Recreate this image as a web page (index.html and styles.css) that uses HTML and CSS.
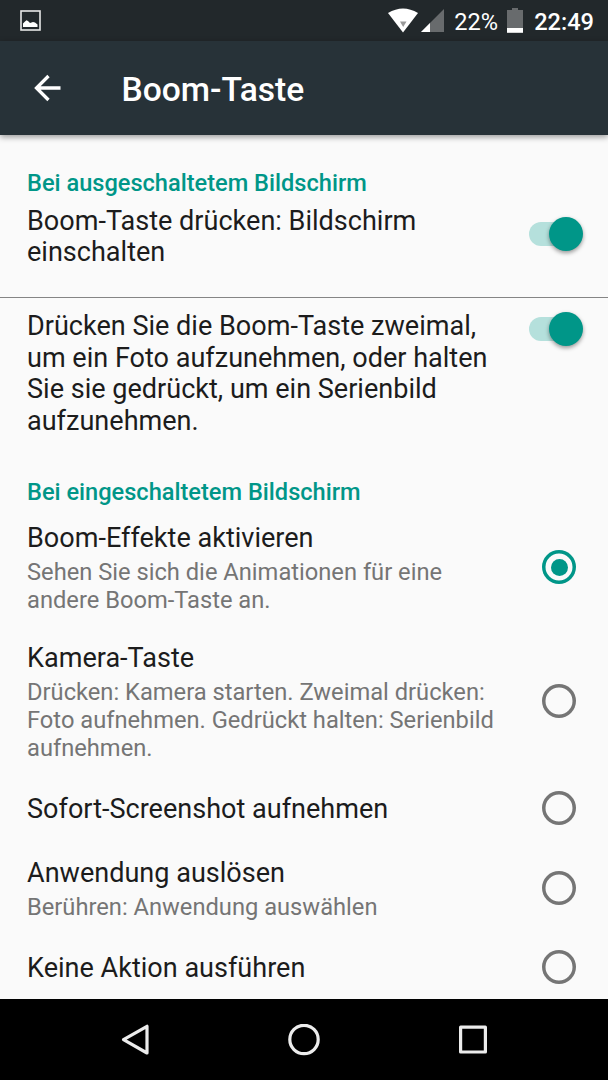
FILE: index.html
```html
<!DOCTYPE html>
<html lang="de">
<head>
    <meta charset="UTF-8">
    <meta name="viewport" content="width=device-width, initial-scale=1.0">
    <title>Boom-Taste</title>
    <link rel="stylesheet" href="styles.css">
</head>
<body>
    <div class="screen">
        <div class="status-bar">
            <svg class="status-picture" width="22" height="22" viewBox="0 0 22 22">
                <rect x="1" y="1" width="19" height="19" fill="none" stroke="#e8e8e8" stroke-width="1.6"/>
                <path d="M3 17V13.500L5 11.500L6.500 10.300L8 11L10 13L13 12L15 12.500L17.500 14.500V17Z" fill="#fff"/>
            </svg>
            <svg class="status-wifi" width="30" height="25" viewBox="0 0 30 25">
                <path d="M0 5Q15 -4 30 5L15 24.500Z" fill="#fff"/>
                <path d="M12 13.500H18.500L15.200 19Z" fill="#999"/>
            </svg>
            <svg class="status-signal" width="23" height="23" viewBox="0 0 23 23">
                <path d="M23 0V23H0Z" fill="#686b6d"/>
                <path d="M9 14V23H0Z" fill="#fff"/>
            </svg>
            <span class="status-percent">22%</span>
            <svg class="status-battery" width="16" height="25" viewBox="0 0 16 25">
                <path d="M5 0H11V2H16V25H0V2H5Z" fill="#686b6d"/>
                <rect y="20" width="16" height="4.700" fill="#fff"/>
            </svg>
            <span class="status-time">22:49</span>
        </div>

        <header class="app-bar">
            <svg class="back-icon" width="28" height="28" viewBox="0 0 28 28">
                <path d="M27.500 14H3M15.500 2L3.500 14L15.500 26" fill="none" stroke="#fff" stroke-width="3.300"/>
            </svg>
            <h1 class="app-title">Boom-Taste</h1>
        </header>

        <main class="content">
            <h2 class="category">Bei ausgeschaltetem Bildschirm</h2>
            <div class="row row-switch row-screen">
                <p class="row-title">Boom-Taste drücken: Bildschirm<br>einschalten</p>
                <div class="switch"><div class="thumb"></div></div>
            </div>
            <div class="row row-switch row-photo">
                <p class="row-title">Drücken Sie die Boom-Taste zweimal,<br>um ein Foto aufzunehmen, oder halten<br>Sie sie gedrückt, um ein Serienbild<br>aufzunehmen.</p>
                <div class="switch"><div class="thumb"></div></div>
            </div>

            <h2 class="category category-on">Bei eingeschaltetem Bildschirm</h2>
            <div class="row row-effects">
                <div class="row-text">
                    <p class="row-title">Boom-Effekte aktivieren</p>
                    <p class="row-summary">Sehen Sie sich die Animationen für eine<br>andere Boom-Taste an.</p>
                </div>
                <div class="radio checked"></div>
            </div>
            <div class="row row-camera">
                <div class="row-text">
                    <p class="row-title">Kamera-Taste</p>
                    <p class="row-summary">Drücken: Kamera starten. Zweimal drücken:<br>Foto aufnehmen. Gedrückt halten: Serienbild<br>aufnehmen.</p>
                </div>
                <div class="radio"></div>
            </div>
            <div class="row row-single">
                <div class="row-text">
                    <p class="row-title">Sofort-Screenshot aufnehmen</p>
                </div>
                <div class="radio"></div>
            </div>
            <div class="row row-app">
                <div class="row-text">
                    <p class="row-title">Anwendung auslösen</p>
                    <p class="row-summary">Berühren: Anwendung auswählen</p>
                </div>
                <div class="radio"></div>
            </div>
            <div class="row row-single">
                <div class="row-text">
                    <p class="row-title">Keine Aktion ausführen</p>
                </div>
                <div class="radio"></div>
            </div>
        </main>

        <nav class="nav-bar">
            <svg width="32" height="32" viewBox="0 0 32 32">
                <path d="M28 2.300V29L4.500 15.600Z"/>
            </svg>
            <svg width="32" height="32" viewBox="0 0 32 32">
                <circle cx="16" cy="15.500" r="14.200"/>
            </svg>
            <svg width="32" height="32" viewBox="0 0 32 32">
                <rect x="3.600" y="3.200" width="24.800" height="24.800"/>
            </svg>
        </nav>
    </div>
</body>
</html>
```

FILE: styles.css
```css
* {
    margin: 0;
    padding: 0;
    box-sizing: border-box;
}

body {
    font-family: Roboto, sans-serif;
    background: #fafafa;
    color: #1c1c1c;
}

.screen {
    width: 608px;
    height: 1080px;
    display: flex;
    flex-direction: column;
    overflow: hidden;
}

.status-bar {
    height: 41px;
    flex-shrink: 0;
    display: flex;
    align-items: center;
    padding: 0 14px 0 20px;
    background: #22282b;
    color: #fff;
    font-size: 23.6px;
}

.status-wifi {
    margin-left: auto;
}

.status-signal {
    margin-left: 3px;
}

.status-percent {
    margin-left: 10px;
    padding-top: 2px;
}

.status-battery {
    margin-left: 8.5px;
}

.status-time {
    margin-left: 11.5px;
    padding-top: 2px;
    font-weight: 500;
}

.app-bar {
    position: relative;
    height: 94px;
    flex-shrink: 0;
    display: flex;
    align-items: center;
    padding-left: 33px;
    background: #273238;
    color: #fff;
    box-shadow: 0 2px 6px rgba(0, 0, 0, 0.4);
}

.app-title {
    margin-left: 60.5px;
    padding-top: 2px;
    font-size: 33.6px;
    font-weight: 500;
}

.content {
    height: 864px;
    flex-shrink: 0;
    overflow: hidden;
    padding-top: 35px;
}

.category {
    height: 28px;
    padding-left: 27px;
    font-size: 23.6px;
    font-weight: 500;
    line-height: 27.7px;
    color: #009688;
}

.row {
    display: flex;
    justify-content: space-between;
    align-items: center;
    padding: 0 32px 0 27px;
}

.row-text {
    padding-top: 4px;
}

.row-title {
    font-size: 27.05px;
    line-height: 31.67px;
    white-space: nowrap;
}

.row-summary {
    margin-top: 4px;
    font-size: 23.7px;
    line-height: 27.8px;
    color: #757575;
    white-space: nowrap;
}

.row-switch {
    align-items: flex-start;
    padding-right: 25px;
}

.row-screen {
    height: 100px;
    padding-top: 7.5px;
    border-bottom: 1px solid #858585;
}

.row-screen .switch {
    margin-top: 16.5px;
}

.row-photo {
    height: 181px;
    padding-top: 13px;
}

.row-photo .switch {
    margin-top: 6px;
}

.switch {
    display: flex;
    justify-content: flex-end;
    align-items: center;
    width: 54px;
    height: 24px;
    border-radius: 12px;
    background: linear-gradient(to right, #b5e0dc 40px, transparent 40px);
}

.thumb {
    width: 34px;
    height: 34px;
    flex-shrink: 0;
    border-radius: 50%;
    background: #009688;
    box-shadow: 0 2px 4px rgba(0, 0, 0, 0.4);
}

.category-on {
    height: 28px;
}

.row-effects {
    height: 120px;
}

.row-effects .row-text {
    padding-top: 4px;
}

.row-camera {
    height: 147px;
}

.row-camera .row-text {
    padding-top: 5px;
}

.row-single {
    height: 68px;
}

.row-app {
    height: 91px;
}

.row-app .row-text {
    padding-top: 5px;
}

.radio {
    display: flex;
    justify-content: center;
    align-items: center;
    width: 34px;
    height: 34px;
    border-radius: 50%;
    box-shadow: inset 0 0 0 3.5px #757575;
}

.radio.checked {
    box-shadow: inset 0 0 0 3.5px #009688;
}

.radio.checked::before {
    content: "";
    width: 17px;
    height: 17px;
    border-radius: 50%;
    background: #009688;
}

.nav-bar {
    height: 81px;
    flex-shrink: 0;
    display: flex;
    justify-content: space-between;
    align-items: center;
    padding: 0 119px;
    background: #000;
}

.nav-bar svg {
    fill: none;
    stroke: #ececec;
    stroke-width: 3.2;
    stroke-linejoin: round;
}
```
